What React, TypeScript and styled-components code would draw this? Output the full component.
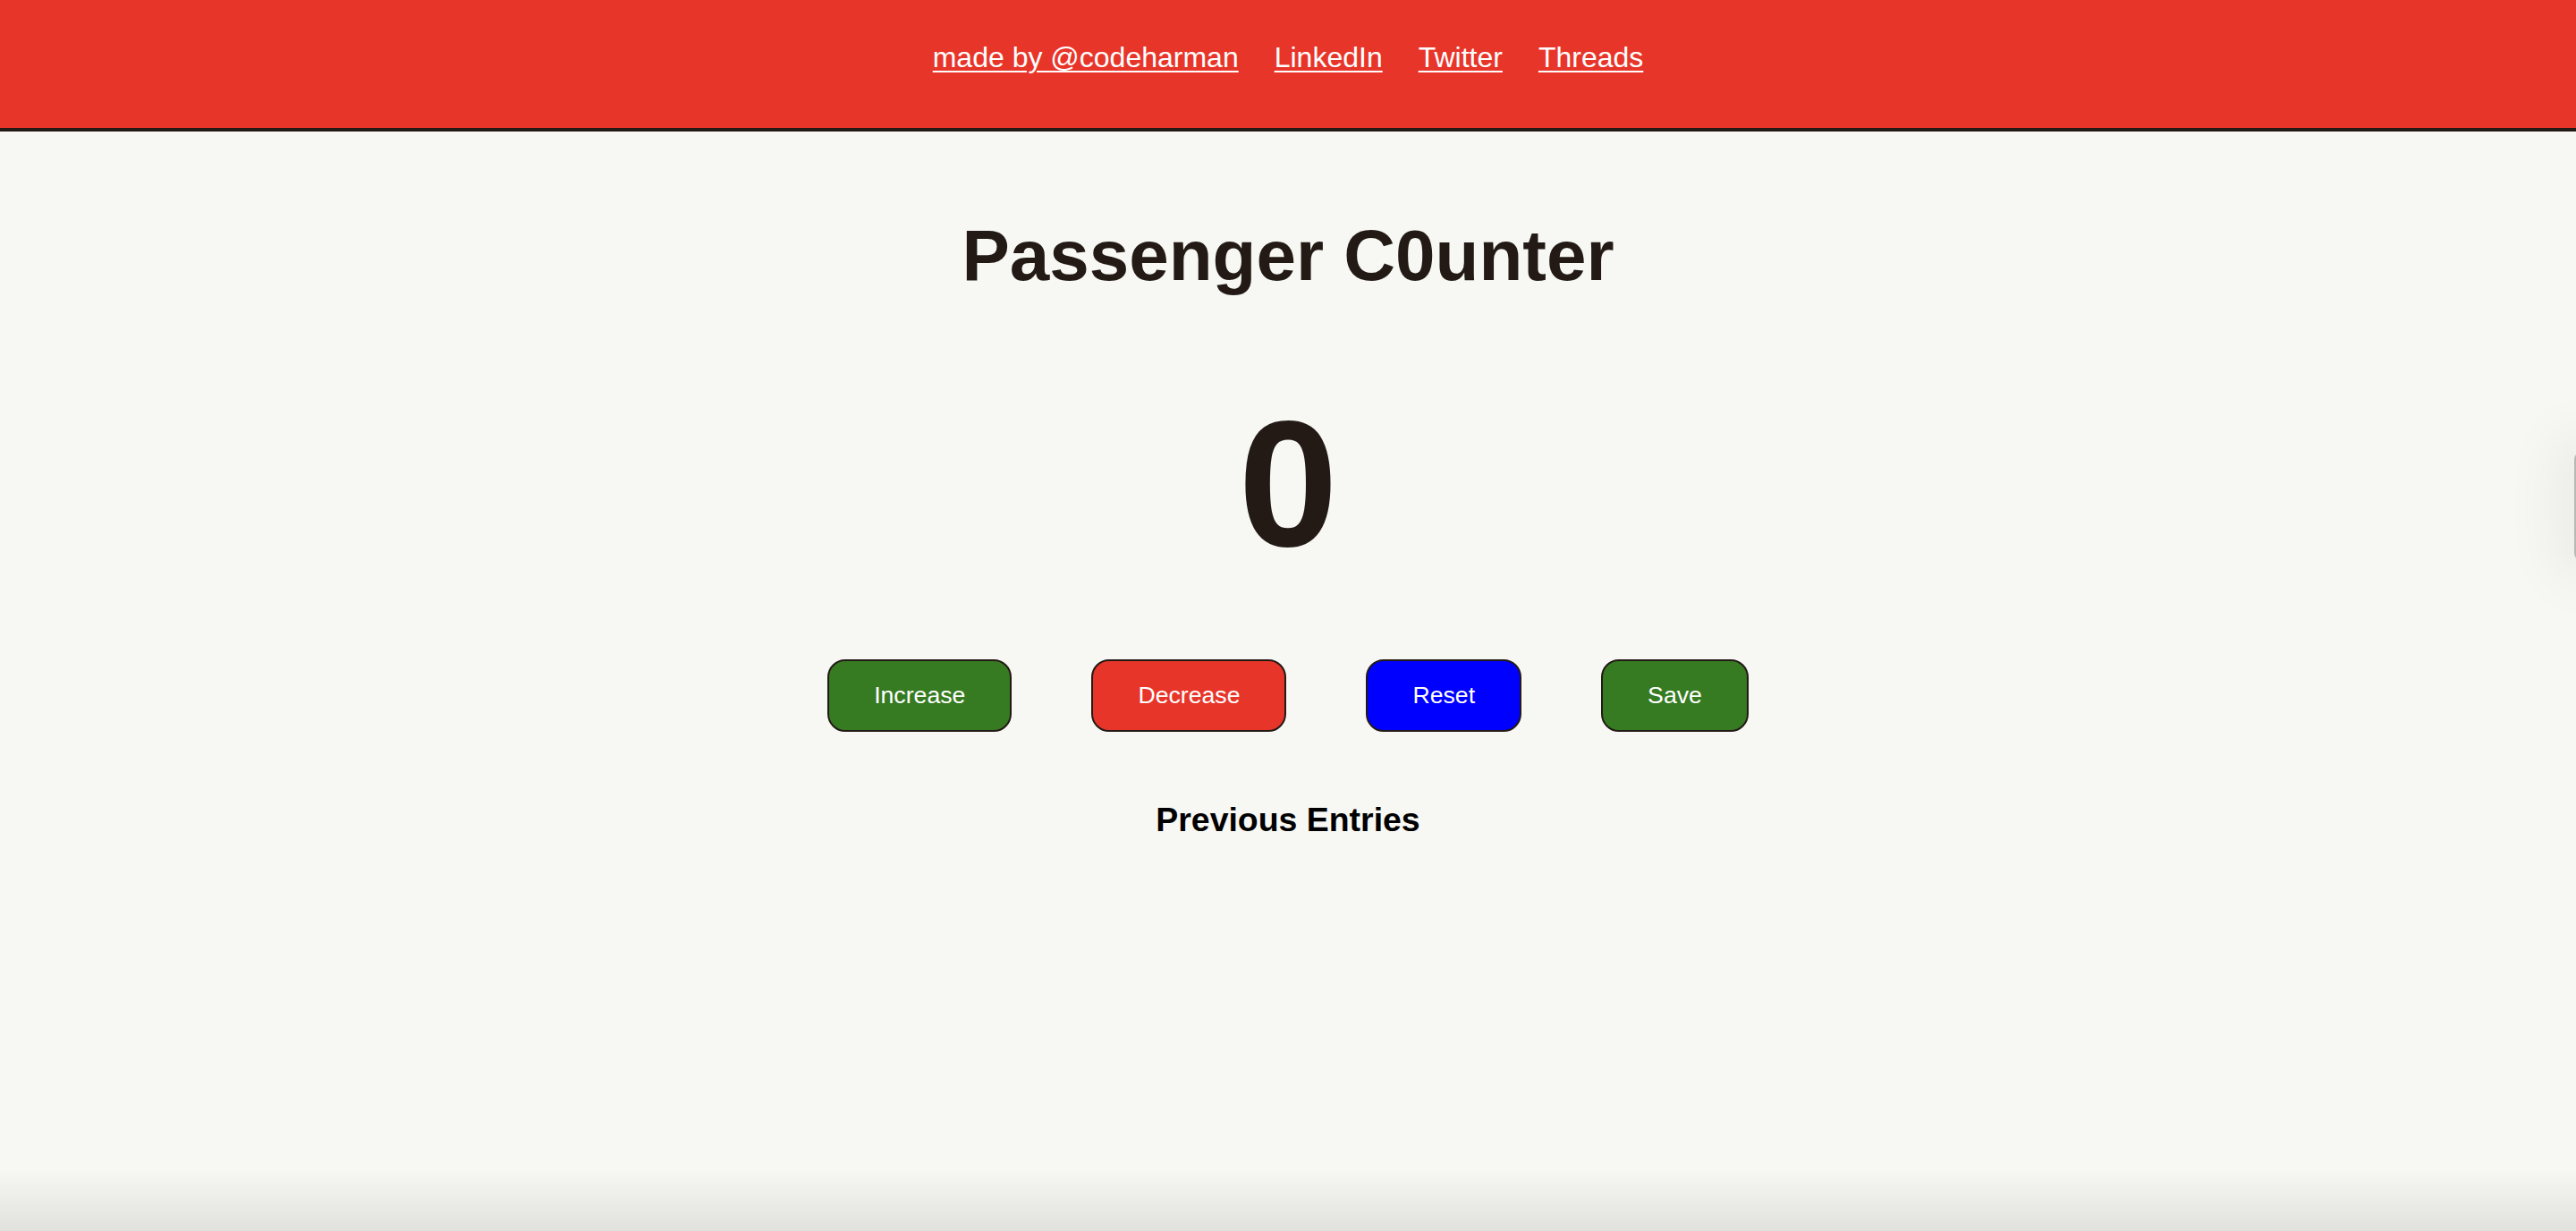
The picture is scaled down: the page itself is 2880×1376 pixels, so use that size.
import React, { useState } from "react";
import styled, { createGlobalStyle } from "styled-components";

const GlobalStyle = createGlobalStyle`
  html, body {
    margin: 0;
    padding: 0;
    background: #f7f7f3;
    font-family: "Liberation Sans", Arial, Helvetica, sans-serif;
  }
  * { box-sizing: border-box; }
`;

const Page = styled.div`
  position: relative;
  min-height: 100vh;
  overflow: hidden;
  display: flex;
  flex-direction: column;
  align-items: center;
  background:
    linear-gradient(to bottom, rgba(0, 0, 0, 0) calc(100% - 70px), rgba(0, 0, 0, 0.09) 100%),
    #f7f7f3;
`;

const Header = styled.header`
  width: 100%;
  height: 147px;
  padding-top: 46px;
  background: #e8352a;
  border-bottom: 4px solid #231a15;
  display: flex;
  justify-content: center;
  align-items: flex-start;
  gap: 40px;
`;

const NavLink = styled.a`
  color: #ffffff;
  font-size: 32px;
  line-height: normal;
  text-decoration: underline;
  text-decoration-thickness: 2px;
  text-underline-offset: 4px;
`;

const Title = styled.h1`
  margin: 93px 0 0;
  font-size: 80px;
  font-weight: 700;
  line-height: normal;
  color: #231a15;
`;

const Count = styled.h2`
  margin: 94px 0 0;
  font-size: 200px;
  font-weight: 700;
  line-height: normal;
  color: #231a15;
`;

const ButtonRow = styled.div`
  margin-top: 81px;
  display: flex;
  gap: 89px;
`;

const ActionButton = styled.button<{ $bg: string }>`
  height: 81px;
  padding: 0 50px;
  border: 2px solid #231a15;
  border-radius: 20px;
  background: ${(p) => p.$bg};
  color: #ffffff;
  font-family: "Liberation Sans", Arial, Helvetica, sans-serif;
  font-size: 26.67px;
  cursor: pointer;
`;

const EntriesTitle = styled.h3`
  margin: 77px 0 0;
  font-size: 37.44px;
  font-weight: 700;
  line-height: normal;
  color: #000000;
`;

const EntriesText = styled.p`
  margin: 10px 0 0;
  font-size: 32px;
  color: #231a15;
`;

const EdgeHandle = styled.div`
  position: absolute;
  right: -18px;
  top: 504px;
  width: 20px;
  height: 124px;
  border-radius: 10px;
  background: #b9b9b4;
  box-shadow: 0 0 60px 24px rgba(0, 0, 0, 0.05);
`;

export default function App() {
  const [count, setCount] = useState(0);
  const [entries, setEntries] = useState<number[]>([]);

  return (
    <>
      <GlobalStyle />
      <Page>
        <Header>
          <NavLink href="#">made by @codeharman</NavLink>
          <NavLink href="#">LinkedIn</NavLink>
          <NavLink href="#">Twitter</NavLink>
          <NavLink href="#">Threads</NavLink>
        </Header>
        <Title>Passenger C0unter</Title>
        <Count>{count}</Count>
        <ButtonRow>
          <ActionButton $bg="#367b22" onClick={() => setCount((c) => c + 1)}>
            Increase
          </ActionButton>
          <ActionButton $bg="#e8352a" onClick={() => setCount((c) => Math.max(0, c - 1))}>
            Decrease
          </ActionButton>
          <ActionButton $bg="#0000ff" onClick={() => setCount(0)}>
            Reset
          </ActionButton>
          <ActionButton
            $bg="#367b22"
            onClick={() => {
              setEntries((e) => [...e, count]);
              setCount(0);
            }}
          >
            Save
          </ActionButton>
        </ButtonRow>
        <EntriesTitle>Previous Entries</EntriesTitle>
        {entries.length > 0 && <EntriesText>{entries.join(" - ")}</EntriesText>}
        <EdgeHandle />
      </Page>
    </>
  );
}
